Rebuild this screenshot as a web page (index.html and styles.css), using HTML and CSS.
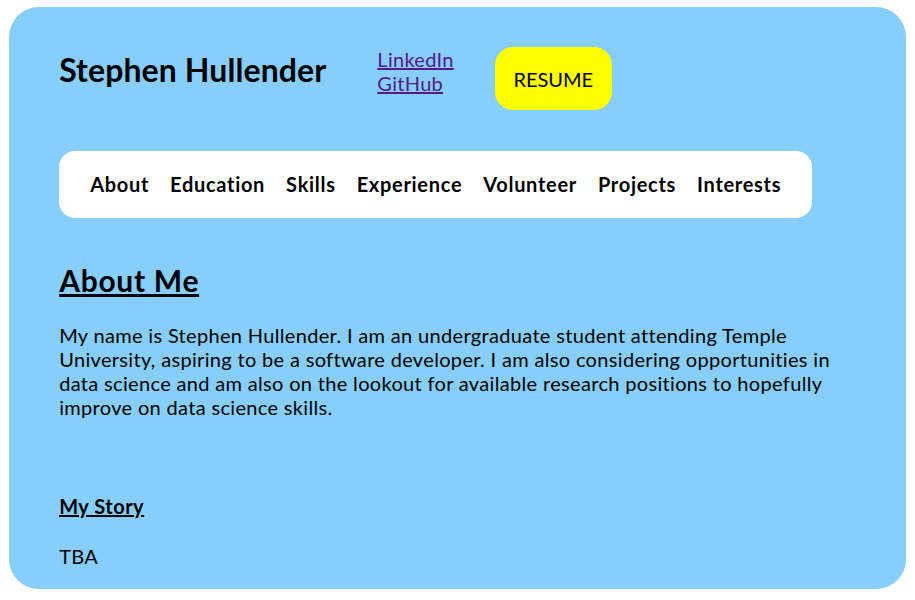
FILE: index.html
```html
<!DOCTYPE html>
<html lang="en">
<head>
<meta charset="utf-8">
<title>Stephen Hullender</title>
<link rel="stylesheet" href="styles.css">
</head>
<body>
<div class="page">
  <header class="header">
    <h1 class="name">Stephen Hullender</h1>
    <div class="links">
      <a href="#linkedin">LinkedIn</a>
      <a href="#github">GitHub</a>
    </div>
    <a class="resume" href="#resume">RESUME</a>
  </header>
  <nav class="nav">
    <a href="#about">About</a>
    <a href="#education">Education</a>
    <a href="#skills">Skills</a>
    <a href="#experience">Experience</a>
    <a href="#volunteer">Volunteer</a>
    <a href="#projects">Projects</a>
    <a href="#interests">Interests</a>
  </nav>
  <section class="about">
    <h2 class="section-title">About Me</h2>
    <p class="text">My name is Stephen Hullender. I am an undergraduate student attending Temple University, aspiring to be a software developer. I am also considering opportunities in data science and am also on the lookout for available research positions to hopefully improve on data science skills.</p>
    <h3 class="sub-title">My Story</h3>
    <p class="text story">TBA</p>
  </section>
</div>
</body>
</html>
```
FILE: styles.css
```css
body {
  margin: 7px 0;
  font-family: "Lato", "Open Sans", sans-serif;
  color: #000;
}

.page {
  width: 98%;
  margin: 0 auto;
  box-sizing: border-box;
  background: #87cefa;
  border-radius: 30px;
  padding: 40px 50px 21px 50px;
}

.header {
  display: flex;
  align-items: flex-start;
}

.name {
  margin: 4px 51px 0 0;
  font-size: 32px;
  line-height: 38px;
  font-weight: 700;
  letter-spacing: 0.1px;
}

.links {
  display: flex;
  flex-direction: column;
  align-items: flex-start;
  margin-right: 41px;
}

.links a {
  font-size: 20px;
  line-height: 24px;
  letter-spacing: 0.3px;
  color: #551a8b;
}

.resume {
  display: flex;
  align-items: center;
  justify-content: center;
  width: 117px;
  height: 63px;
  background: #ffff00;
  border-radius: 18px;
  color: #000;
  font-size: 20px;
  text-decoration: none;
}

.nav {
  display: flex;
  width: fit-content;
  gap: 21px;
  margin-top: 41px;
  padding: 21px 31px 22px 31px;
  background: #fff;
  border-radius: 16px;
}

.nav a {
  color: #000;
  font-size: 20px;
  line-height: 24px;
  font-weight: 700;
  letter-spacing: 0.7px;
  text-decoration: none;
}

.section-title {
  margin: 44px 0 0;
  font-size: 30px;
  line-height: 36px;
  font-weight: 700;
  letter-spacing: 0.7px;
  text-decoration: underline;
}

.text {
  margin: 25px 0 0;
  font-size: 20px;
  line-height: 24px;
  letter-spacing: 0.33px;
}

.sub-title {
  margin: 75px 0 0;
  font-size: 20px;
  line-height: 24px;
  font-weight: 700;
  letter-spacing: 0.5px;
  text-decoration: underline;
}

.story {
  margin-top: 26px;
}
```
